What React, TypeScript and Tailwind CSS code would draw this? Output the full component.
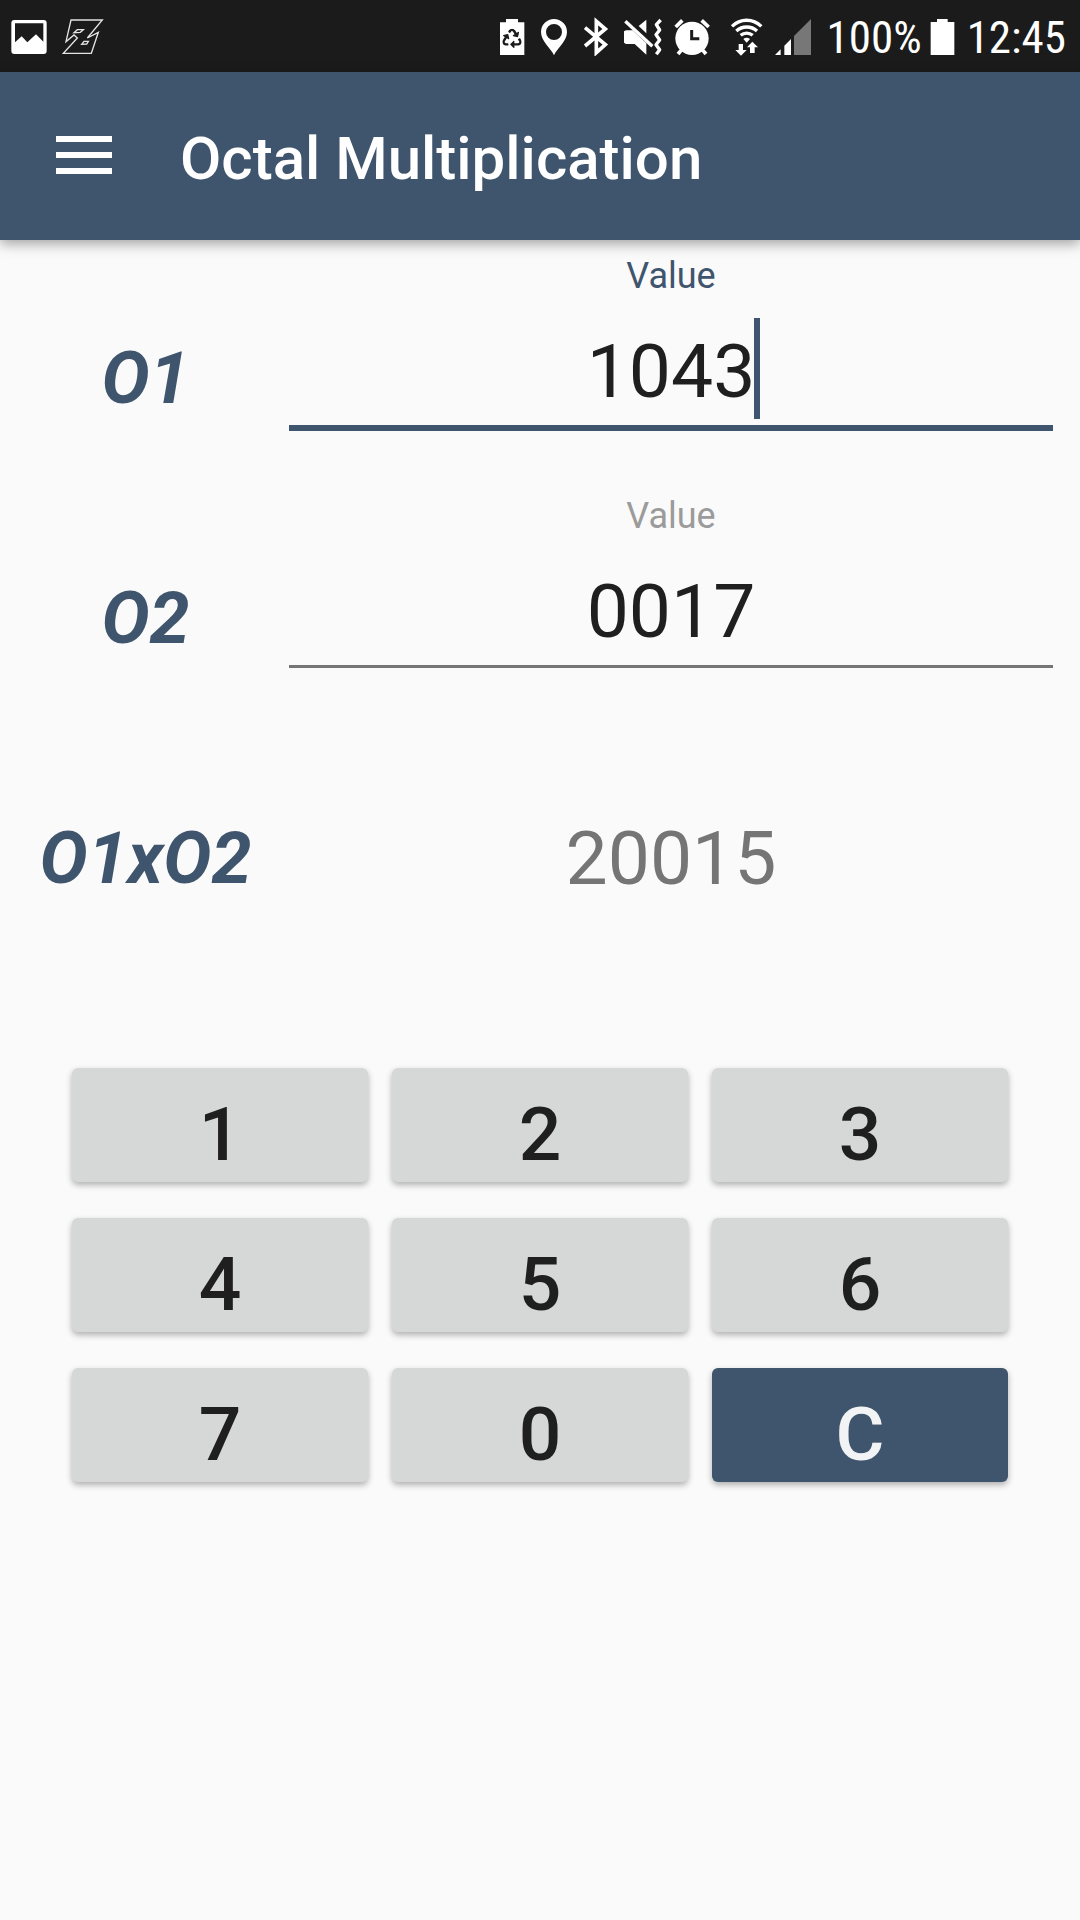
import { useState } from "react";
import { FaRecycle } from "react-icons/fa";

const KEYS = ["1", "2", "3", "4", "5", "6", "7", "0"];

function multiplyOctal(a: string, b: string) {
	return (parseInt(a || "0", 8) * parseInt(b || "0", 8)).toString(8);
}

function App() {
	const [values, setValues] = useState(["1043", "0017"]);
	const [active, setActive] = useState(0);

	const updateValue = (index: number, next: string) => {
		setValues(
			values.map((value, i) =>
				i === index ? next.replace(/[^0-7]/g, "") : value
			)
		);
	};

	return (
		<div className="min-h-screen bg-[#fafafa] font-['Roboto',sans-serif] text-[#1f1f1f]">
			<StatusBar />

			<header className="relative flex h-42 items-center gap-17 bg-[#3f556d] px-14 pb-0.5 text-white shadow-[0_4px_12px_rgba(0,0,0,0.35)]">
				<button aria-label="Open menu" className="flex w-14 flex-col gap-2.5">
					<span className="h-1.5 bg-white" />
					<span className="h-1.5 bg-white" />
					<span className="h-1.5 bg-white" />
				</button>
				<h1 className="pt-2 text-[60px] font-medium leading-18">
					Octal Multiplication
				</h1>
			</header>

			<main>
				{values.map((value, i) => (
					<ValueRow
						key={i}
						name={`O${i + 1}`}
						value={value}
						active={active === i}
						onFocus={() => setActive(i)}
						onChange={(next) => updateValue(i, next)}
					/>
				))}

				<div className="grid h-60 grid-cols-[289px_1fr] items-start pt-24 text-center">
					<RowName>O1xO2</RowName>
					<output className="mr-[27px] text-[75px] leading-21 text-[#757575]">
						{multiplyOctal(values[0], values[1])}
					</output>
				</div>

				<div className="grid grid-cols-3 gap-x-6 gap-y-9 px-18 pt-27">
					{KEYS.map((key) => (
						<button
							key={key}
							onClick={() => updateValue(active, values[active] + key)}
							className="h-[114px] rounded-md bg-[#d6d7d7] pt-4.5 text-[75px] font-medium leading-21 shadow-[0_3px_6px_rgba(0,0,0,0.3)]"
						>
							{key}
						</button>
					))}
					<button
						onClick={() => updateValue(active, "")}
						className="h-[114px] rounded-md bg-[#3f556d] pt-4.5 text-[75px] font-medium leading-21 text-[#f2f3f4] shadow-[0_3px_6px_rgba(0,0,0,0.3)]"
					>
						C
					</button>
				</div>
			</main>
		</div>
	);
}

function RowName({ children }: { children: string }) {
	return (
		<span className="pl-0.5 text-center text-[72px] font-bold italic leading-[86px] text-[#3f556d]">
			{children}
		</span>
	);
}

function ValueRow({
	name,
	value,
	active,
	onFocus,
	onChange,
}: {
	name: string;
	value: string;
	active: boolean;
	onFocus: () => void;
	onChange: (next: string) => void;
}) {
	return (
		<div className="grid h-60 grid-cols-[289px_1fr]">
			<div className="grid items-start pt-24">
				<RowName>{name}</RowName>
			</div>
			<div className="mr-[27px] flex flex-col pt-4">
				<label
					htmlFor={name}
					className={`text-center text-[36px] leading-10 ${
						active ? "text-[#3f556d]" : "text-[#9b9b9b]"
					}`}
				>
					Value
				</label>
				<div
					className={`relative mt-5.5 text-[75px] ${
						active
							? "border-b-6 border-[#3f556d]"
							: "border-b-3 border-[#757575]"
					}`}
				>
					<input
						id={name}
						type="text"
						inputMode="none"
						value={value}
						onFocus={onFocus}
						onChange={(e) => onChange(e.target.value)}
						className="block h-[107px] w-full text-center caret-transparent outline-none"
					/>
					{active && (
						<span
							className="absolute top-0 -ml-px h-[101px] w-1.5 bg-[#3f556d]"
							style={{ left: `calc(50% + ${value.length / 2}ch)` }}
						/>
					)}
				</div>
			</div>
		</div>
	);
}

function StatusBar() {
	return (
		<div className="flex h-18 items-center justify-between bg-[#1b1b1b] pl-2.5 pr-3.5 text-white">
			<div className="flex items-center gap-3">
				{/* picture */}
				<svg width="38" height="40" viewBox="0 0 114 120" fill="currentColor">
					<path
						fillRule="evenodd"
						d="M13 12H101Q110 12 110 21V105Q110 114 101 114H13Q4 114 4 105V21Q4 12 13 12ZM15 22V79L35 61L52 79L78 55L100 77V22Z"
					/>
				</svg>
				{/* flash */}
				<svg
					width="44"
					height="40"
					viewBox="0 0 132 120"
					fill="none"
					stroke="#e4e4e4"
					strokeWidth="4"
				>
					<path d="M33 12H127L82 66L115 49L94 112H10L52 66L42 57L18 77Z" />
					<path d="M42 50L52 41H70L61 49ZM65 85L72 76H85L80 84Z" />
				</svg>
			</div>

			<div className="flex items-center gap-3">
				{/* battery saver */}
				<svg width="28" height="40" viewBox="0 0 84 120" fill="currentColor">
					<path d="M24 9H60V19H79V117H6V19H24Z" />
					<FaRecycle x="13" y="38" size={58} color="#1b1b1b" />
				</svg>
				{/* location */}
				<svg width="32" height="40" viewBox="0 0 96 120" fill="currentColor">
					<path
						fillRule="evenodd"
						d="M48 118C40 98 9 76 9 48A39 39 0 0 1 87 48C87 76 56 98 48 118ZM48 24A24 24 0 1 0 48 72A24 24 0 1 0 48 24Z"
					/>
				</svg>
				{/* bluetooth */}
				<svg
					width="28"
					height="40"
					viewBox="0 0 84 120"
					fill="none"
					stroke="currentColor"
					strokeWidth="11"
				>
					<path d="M9 35L70 86L43 110V16L70 39L9 90" />
				</svg>
				{/* muted, vibrating */}
				<svg
					width="40"
					height="40"
					viewBox="0 0 120 120"
					fill="none"
					stroke="currentColor"
					strokeWidth="10"
				>
					<path
						fill="currentColor"
						stroke="none"
						d="M50 30L73 11V52ZM6 46L12 43H32L73 82V116L38 84H12L6 80Z"
					/>
					<path d="M10 16L91 91" />
					<path
						strokeLinejoin="round"
						d="M116 12L103 26L113 42L102 56L113 72L102 86L113 101L103 115"
					/>
				</svg>
				{/* alarm */}
				<svg
					width="38"
					height="40"
					viewBox="0 0 114 120"
					fill="none"
					stroke="currentColor"
					strokeWidth="11"
				>
					<circle cx="54" cy="67" r="50" fill="currentColor" stroke="none" />
					<path d="M5 33L25 13M83 13L104 33M12 114L24 100M96 114L84 100" />
					<path stroke="#1b1b1b" strokeWidth="9" d="M53 42V68H76" />
				</svg>
				{/* wifi */}
				<svg
					width="39"
					height="40"
					viewBox="0 0 117 120"
					fill="none"
					stroke="currentColor"
					strokeWidth="10"
				>
					<path d="M24 31A62 62 0 0 1 112 31M37 45A46 46 0 0 1 99 45M50 58A28 28 0 0 1 86 58" />
					<path
						fill="currentColor"
						stroke="none"
						d="M58 69Q68 62 78 69L68 80ZM44 84H57V102H68L51 119L34 102H44ZM85 77L102 94H92V111H78V94H69Z"
					/>
				</svg>
				{/* signal */}
				<svg width="36" height="40" viewBox="0 0 108 120" fill="currentColor">
					<path d="M0 117L17 100V117ZM28 117V89L48 69V117Z" />
					<path fill="#777777" d="M57 117V60L108 9V117Z" />
				</svg>
				<div className="flex items-center gap-2 pl-1">
					<span className="pt-1 font-['Roboto_Condensed','Roboto',sans-serif] text-[45px] leading-16">
						100%
					</span>
					{/* battery */}
					<svg width="25" height="40" viewBox="0 0 75 120" fill="currentColor">
						<path d="M21 9H53V18H73V117H2V18H21Z" />
					</svg>
				</div>
				<span className="pt-1 font-['Roboto_Condensed','Roboto',sans-serif] text-[45px] leading-16">
					12:45
				</span>
			</div>
		</div>
	);
}

export default App;
